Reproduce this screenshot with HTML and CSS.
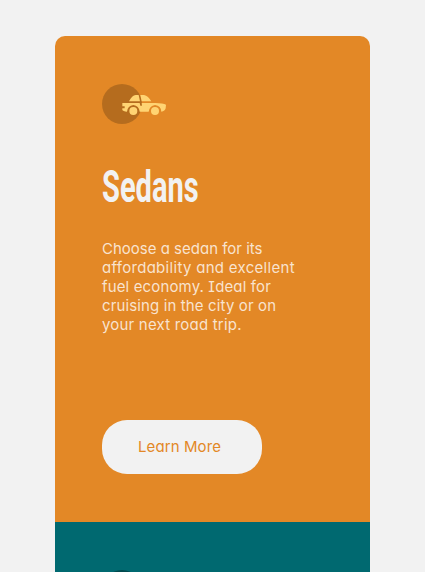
FILE: index.html
```html
<!DOCTYPE html>
<html lang="en">
<head>
<meta charset="utf-8">
<meta name="viewport" content="width=device-width, initial-scale=1">
<title>Sedans</title>
<link rel="stylesheet" href="styles.css">
</head>
<body>
<main class="cards">
  <section class="card card-sedans">
    <svg class="icon" viewBox="21 18 192 120" aria-hidden="true">
      <circle cx="81" cy="78" r="60" fill="#000" fill-opacity=".2"/>
      <path fill="#ffd473" d="M102 70 Q111 52 122 51 L131 51 L135 70Z M136 51 L147 51 Q160 54 169 70 L140 70Z M82 75 L134 75 L136 83 L141 83 L140 75 L180 75 Q205 76 213 80 L212 91 Q210 100 199 101 Q198 83 180 81 Q164 83 161 101 L134 101 Q132 83 115 81 Q98 83 96 101 Q84 100 82 96 L82 91 L89 91 L89 85 L82 85Z"/>
      <circle cx="115" cy="99" r="12" fill="#ffd473"/>
      <circle cx="180" cy="99" r="12" fill="#ffd473"/>
    </svg>
    <h1 class="title"><span class="title-text">Sedans</span></h1>
    <p class="copy">
      <span class="line line-a">Choose a sedan for its</span>
      <span class="line line-b">affordability and excellent</span>
      <span class="line line-c">fuel economy. Ideal for</span>
      <span class="line line-d">cruising in the city or on</span>
      <span class="line line-e">your next road trip.</span>
    </p>
    <a class="button" href="#">Learn More</a>
  </section>
  <section class="card card-suvs">
    <svg class="icon" viewBox="0 0 64 40" aria-hidden="true">
      <circle cx="20" cy="20" r="20" fill="#000" fill-opacity=".3"/>
    </svg>
  </section>
</main>
</body>
</html>
```
FILE: styles.css
```css
* { box-sizing: border-box; }
body {
  margin: 0;
  height: 572px;
  padding: 36px 0 0 55px;
  overflow: hidden;
  background: #f2f2f2;
  font-family: Inter, "Noto Sans", sans-serif;
  font-feature-settings: "cv11", "cv08";
}
.cards {
  width: 315px;
  height: 536px;
  border-radius: 10px 10px 0 0;
  overflow: hidden;
}
.card { padding: 48px 47px; }
.card-sedans { height: 486px; background: #e38826; }
.card-suvs {
  height: 50px;
  padding-bottom: 0;
  overflow: hidden;
  background: #006970;
}
.icon { display: block; width: 64px; height: 40px; }
.title {
  margin: 39px 0 0;
  height: 48px;
  color: #f2f2f2;
  font: 700 44px/48px Roboto, sans-serif;
}
.title-text {
  display: inline-block;
  transform: scaleX(.66);
  transform-origin: left;
}
.copy {
  margin: 28px 0 0;
  color: rgba(255, 255, 255, .78);
  font-size: 15px;
  line-height: 19px;
}
.line { display: block; white-space: nowrap; }
.line-b { letter-spacing: .3px; }
.line-c { letter-spacing: .14px; }
.line-d { letter-spacing: .13px; }
.line-e { letter-spacing: .2px; }
.button {
  display: block;
  width: 160px;
  height: 54px;
  margin-top: 86px;
  padding-right: 5px;
  border-radius: 25px;
  background: #f2f2f2;
  color: #e38826;
  font-size: 15px;
  line-height: 54px;
  letter-spacing: .1px;
  text-align: center;
  text-decoration: none;
}
```
